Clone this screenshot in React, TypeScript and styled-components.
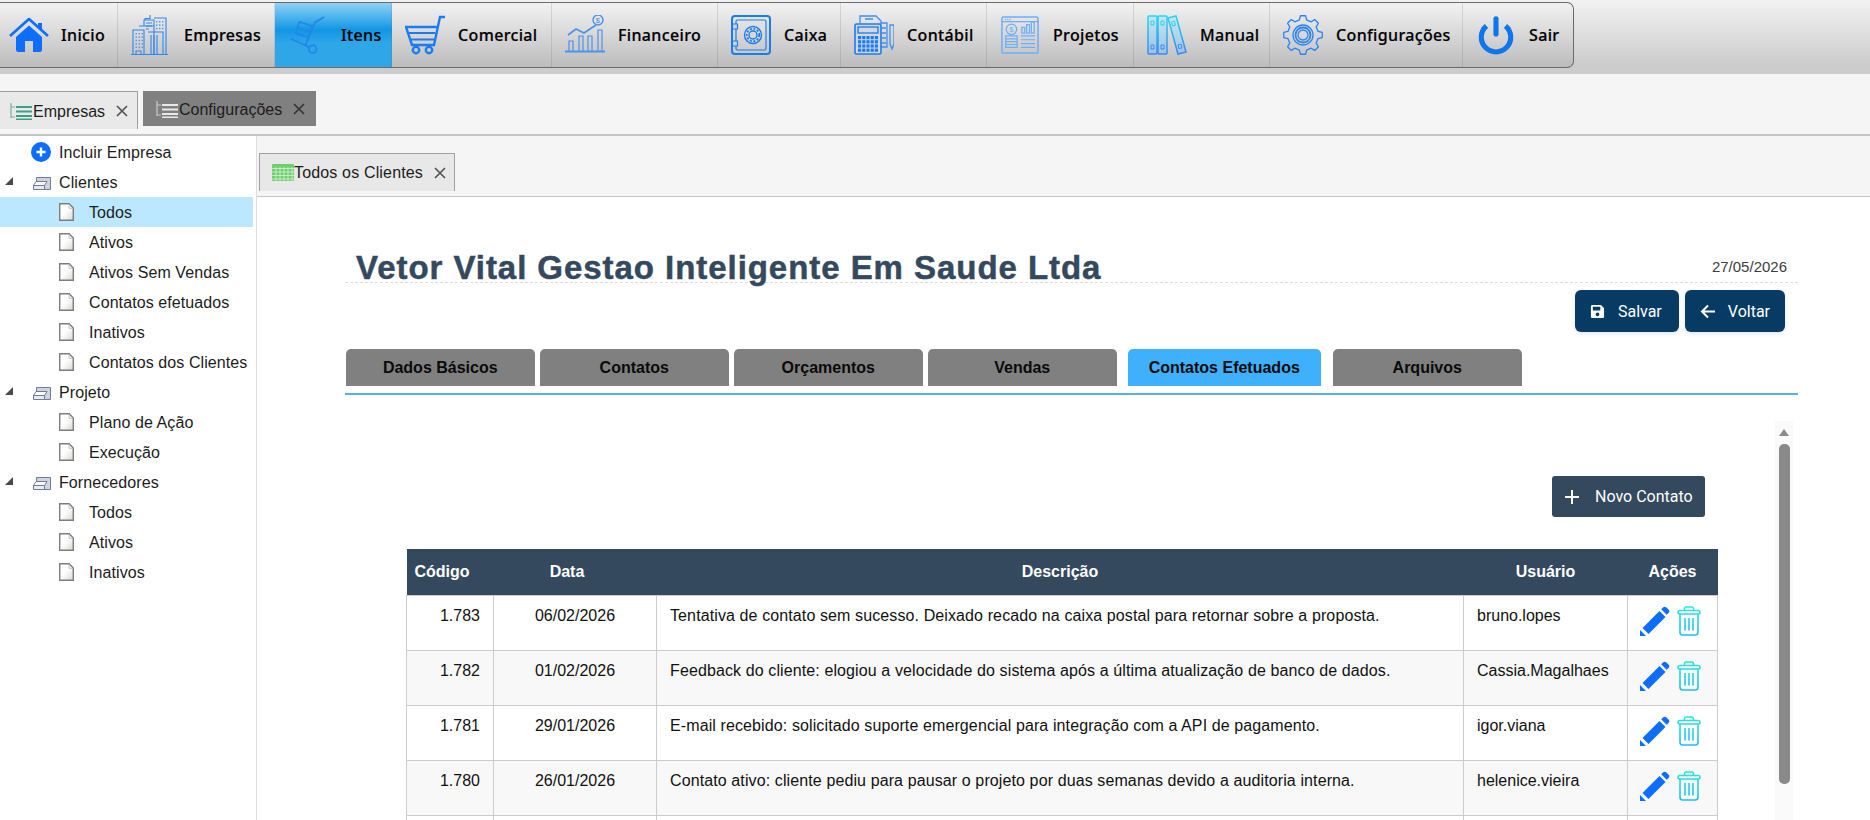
import React from "react";
import styled, { createGlobalStyle } from "styled-components";
import { FaSave } from "react-icons/fa";

const GlobalStyle = createGlobalStyle`
  html, body { margin: 0; padding: 0; height: 100%; background: #fff; overflow: hidden; }
  * { box-sizing: border-box; }
  body { font-family: "Liberation Sans", Arial, sans-serif; font-size: 16px; color: #1c1c1c; }
`;

/* ---------- toolbar icons ---------- */

const gearPath = (cx: number, cy: number, outer: number, inner: number, teeth: number) => {
  const pts: string[] = [];
  const step = (Math.PI * 2) / teeth;
  for (let i = 0; i < teeth; i++) {
    const a = i * step - Math.PI / 2;
    const p = (r: number, d: number) =>
      `${(cx + r * Math.cos(a + d)).toFixed(2)} ${(cy + r * Math.sin(a + d)).toFixed(2)}`;
    pts.push(`${i === 0 ? "M" : "L"}${p(inner, -step * 0.3)}`, `L${p(outer, -step * 0.17)}`, `L${p(outer, step * 0.17)}`, `L${p(inner, step * 0.3)}`);
  }
  return pts.join(" ") + " Z";
};

const Windows = ({ x, y, cols, rows, dx, dy, s = 1.4 }: { x: number; y: number; cols: number; rows: number; dx: number; dy: number; s?: number }) => (
  <>
    {Array.from({ length: rows * cols }).map((_, i) => (
      <rect key={i} x={x + (i % cols) * dx} y={y + Math.floor(i / cols) * dy} width={s} height={s} fill="currentColor" stroke="none" />
    ))}
  </>
);

const HomeIcon = () => (
  <svg viewBox="0 0 40 36" width="40" height="36" fill="#0d6efd">
    <path d="M29 6h4v7l-4-3.400z" />
    <path d="M1 19 20 2l19 17" fill="none" stroke="#0d6efd" strokeWidth="2.600" strokeLinejoin="round" />
    <path d="M7 20 20 8.500 33 20v12.500a2.500 2.500 0 0 1-2.500 2.500H24V24h-8v11H9.500A2.500 2.500 0 0 1 7 32.500z" />
  </svg>
);

const BuildingIcon = () => (
  <svg viewBox="0 0 40 40" width="40" height="40" fill="none" stroke="#2f86ee" strokeWidth="1.100" color="#4a96ef">
    <path d="M0 39.500h37M2 39V15h11V39M13 11V5h10v34M8 11h15M14 5V3.500h5V0M23 3h12v36" />
    <path d="M17 17h15v22M20 20v19M23 20v19M26 20v19" />
    <path d="M5 39v-3h5v3" />
    <Windows x={4.500} y={18} cols={3} rows={5} dx={3} dy={3.400} />
    <Windows x={25} y={6} cols={3} rows={3} dx={3} dy={3.400} />
    <path d="M15 8h6M15 11h6M15 14h3" />
  </svg>
);

const DollyIcon = () => (
  <svg viewBox="0 0 40 40" width="38" height="38" fill="none" stroke="#1f88e8" strokeWidth="1.800">
    <path d="M37 1 27 7 17 32M2 24l20 9" />
    <path d="M11 6l13 4.500-4 12-13-4.500zM9.500 12.500l13 4.500" />
    <circle cx="25" cy="35" r="4" />
  </svg>
);

const CartIcon = () => (
  <svg viewBox="0 0 40 40" width="40" height="40" fill="none" stroke="#1b7cf0" strokeWidth="2.400">
    <path d="M40 2h-5l-6 28H7L1 12h31" />
    <path d="M3 18h27.500M5 24.500h24" strokeWidth="2.200" />
    <circle cx="11" cy="35" r="3.200" />
    <circle cx="24" cy="35" r="3.200" />
  </svg>
);

const ChartIcon = () => (
  <svg viewBox="0 0 40 40" width="40" height="40" fill="none" stroke="#4b92e8" strokeWidth="1.200">
    <path d="M0 36.500h40" strokeWidth="1.800" />
    <path d="M4 36V26h4v10M14 36V21h4v15M23 36V21h4v15M33 36V15h4v21" />
    <path d="M3 20l8-6 8 4 12-8" strokeWidth="1.600" />
    <circle cx="33" cy="5" r="5" strokeWidth="1.400" />
    <text x="33" y="8" textAnchor="middle" fontSize="8" fill="#4b92e8" stroke="none" fontFamily="Liberation Sans, sans-serif">$</text>
  </svg>
);

const SafeIcon = () => (
  <svg viewBox="0 0 40 40" width="40" height="40" fill="none" stroke="#1b7cf0">
    <rect x="1" y="1" width="38" height="38" rx="3" strokeWidth="2" />
    <rect x="5" y="5" width="30" height="30" rx="1.500" strokeWidth="1.200" />
    <path d="M1.500 9h5v5h-5zM1.500 26h5v5h-5z" strokeWidth="1.200" fill="#cfd6dd" />
    <circle cx="22" cy="20" r="8.500" strokeWidth="1.400" />
    <circle cx="22" cy="20" r="4" strokeWidth="1.400" />
    <circle cx="22" cy="20" r="6.200" strokeWidth="1.800" strokeDasharray="2 1.600" />
  </svg>
);

const CalcIcon = () => (
  <svg viewBox="0 0 40 40" width="41" height="40" fill="none" stroke="#1b7cf0" strokeWidth="1.300" color="#1b7cf0">
    <path d="M6 8V1h16l5 5v3M11 4h8" stroke="#3f8fee" />
    <path d="M27 8h6v24h-6M28 13h4M28 18h4M28 23h4M28 28h4" stroke="#3f8fee" />
    <path d="M36 10h4v19l-2 5-2-5z" stroke="#3f8fee" />
    <rect x="1" y="9" width="26" height="30" rx="1.500" fill="#d3d8de" strokeWidth="1.600" />
    <rect x="4" y="12" width="20" height="6" />
    <Windows x={4} y={21} cols={5} rows={4} dx={4.200} dy={4.200} s={3.200} />
  </svg>
);

const ProjectsIcon = () => (
  <svg viewBox="0 0 40 40" width="38" height="38" fill="none" stroke="#6eaef7" strokeWidth="1.300" color="#6eaef7">
    <rect x="1" y="1" width="38" height="38" rx="1.500" strokeWidth="1.600" />
    <path d="M1 6h38" />
    <Windows x={4} y={3} cols={3} rows={1} dx={2.500} dy={0} />
    <circle cx="11" cy="14" r="5.500" />
    <text x="11" y="17" textAnchor="middle" fontSize="8" fill="#6eaef7" stroke="none" fontFamily="Liberation Sans, sans-serif">$</text>
    <path d="M5 21h12v3H5zM5 24h12v3H5zM5 27h12v3H5zM5 30h12v3H5z" />
    <path d="M22 18v-6h3v6zM27 18V9h3v9zM32 18V6.500h3V18zM21 21h15M21 25h15M21 29h15M21 33h15" />
  </svg>
);

const BooksIcon = () => (
  <svg viewBox="0 0 40 40" width="40" height="40" fill="none" stroke="url(#booksGrad)" strokeWidth="1.500">
    <defs>
      <linearGradient id="booksGrad" x1="0" y1="0" x2="0" y2="1">
        <stop offset="0" stopColor="#26d6f2" />
        <stop offset="1" stopColor="#3a86ee" />
      </linearGradient>
      <linearGradient id="booksFill" x1="0" y1="0" x2="0" y2="1">
        <stop offset="0" stopColor="#c4e8f0" />
        <stop offset="1" stopColor="#9cc2ea" />
      </linearGradient>
    </defs>
    <rect x="1" y="1" width="9" height="38" rx="1" fill="url(#booksFill)" />
    <rect x="11" y="1" width="9" height="38" rx="1" fill="url(#booksFill)" />
    <path d="M21 3l8-2 10 36-8 2z" fill="url(#booksFill)" />
    <path d="M4 6h3v4H4zM4 30h3v4H4zM14 6h3v4h-3zM14 30h3v4h-3zM24.500 7l3-.8 1 4-3 .8zM31 30l3-.8 1 3.600-3 .8z" strokeWidth="1" />
  </svg>
);

const GearIcon = () => (
  <svg viewBox="0 0 40 40" width="40" height="40" fill="none" stroke="#2a84f0" strokeWidth="1.300">
    <path d={gearPath(20, 20, 19.400, 15.500, 8)} strokeLinejoin="round" />
    <circle cx="20" cy="20" r="10" />
    <circle cx="20" cy="20" r="7.500" strokeWidth="1.800" />
    <circle cx="20" cy="20" r="5" />
  </svg>
);

const PowerIcon = () => (
  <svg viewBox="0 0 40 40" width="38" height="40" fill="none" stroke="#0d76ec" strokeWidth="5.400" strokeLinecap="round">
    <path d="M20 3v16" />
    <path d="M10 10.500a15.500 15.500 0 1 0 20 0" strokeLinecap="butt" />
  </svg>
);

/* ---------- small icons ---------- */

const ListIcon = ({ $tone }: { $tone: string }) => (
  <svg viewBox="0 0 24 18" width="24" height="18" fill="none" stroke={$tone}>
    <path d="M2 1v15M2 5h4M2 15h4" strokeWidth="1.200" opacity="0.7" />
    <path d="M7 5h16M7 9.500h16M7 14h16M7 17.500h16" strokeWidth="2" />
  </svg>
);

const GridIcon = () => (
  <svg viewBox="0 0 22 17" width="22" height="17" fill="#6fcf6f" stroke="#d6f3d6" strokeWidth="0.800">
    <rect width="22" height="17" rx="1" stroke="none" />
    <path d="M0 4.500h22M0 8h22M0 11.500h22M0 15h22M4 3v14M8 3v14M12 3v14M16 3v14M20 3v14" fill="none" />
  </svg>
);

const CloseIcon = ({ $tone = "#555" }: { $tone?: string }) => (
  <svg viewBox="0 0 12 12" width="12" height="12" fill="none" stroke={$tone} strokeWidth="1.700">
    <path d="M1 1l10 10M11 1 1 11" />
  </svg>
);

const ArrowIcon = () => (
  <svg viewBox="0 0 15 15" width="15" height="15" fill="none" stroke="#fff" strokeWidth="2">
    <path d="M15 7.500H2M8 1.500l-6 6 6 6" />
  </svg>
);

const PlusIcon = () => (
  <svg viewBox="0 0 14 14" width="14" height="14" fill="none" stroke="#fff" strokeWidth="2">
    <path d="M7 0v14M0 7h14" />
  </svg>
);

const PlusCircle = () => (
  <svg viewBox="0 0 20 20" width="20" height="20">
    <circle cx="10" cy="10" r="10" fill="#0d6efd" />
    <path d="M10 5.500v9M5.500 10h9" stroke="#fff" strokeWidth="2.400" />
  </svg>
);

const FolderOpen = () => (
  <svg viewBox="0 0 18 13" width="18" height="13" fill="#eef1f6" stroke="#6f7b98">
    <path d="M3.500.5h14v12h-14z" fill="#cdd3e0" />
    <path d="M3 4.500h11L11.500 8.500H.5z" strokeWidth="1" fill="#fff" />
    <path d="M.5 8.500h11v4H.5z" fill="#e6eaf2" />
  </svg>
);

const DocIcon = () => (
  <svg viewBox="0 0 15 18" width="15" height="18">
    <defs>
      <linearGradient id="docGrad" x1="0" y1="0" x2="1" y2="1">
        <stop offset="0.45" stopColor="#ffffff" />
        <stop offset="1" stopColor="#d8d9cf" />
      </linearGradient>
    </defs>
    <path d="M.7.7h9.500l4.100 4.300v12.300H.700z" fill="url(#docGrad)" stroke="#7d7d7d" strokeWidth="1.400" />
    <path d="M10 1v4.300h4" fill="none" stroke="#b5b5b5" strokeWidth="0.800" />
  </svg>
);

const PencilIcon = () => (
  <svg viewBox="0 0 30 30" width="30" height="30" fill="#0d6efd">
    <path d="M2.500 22 19.500 5l6 6-17 17z" />
    <path d="M21.200 3.300 23 1.500a2.400 2.400 0 0 1 3.400 0l2.100 2.100a2.400 2.400 0 0 1 0 3.400l-1.800 1.800z" />
    <path d="M0 30v-6l6 6z" />
  </svg>
);

const TrashIcon = () => (
  <svg viewBox="0 0 24 30" width="24" height="30" fill="none" stroke="url(#trashGrad)" strokeWidth="1.600">
    <defs>
      <linearGradient id="trashGrad" x1="0" y1="0" x2="0" y2="30" gradientUnits="userSpaceOnUse">
        <stop offset="0" stopColor="#2ce8d6" />
        <stop offset="1" stopColor="#1fbdf2" />
      </linearGradient>
    </defs>
    <path d="M7.500 4V2.500A1.700 1.700 0 0 1 9.200 1h5.600a1.700 1.700 0 0 1 1.700 1.500V4" />
    <rect x="1" y="4.500" width="22" height="3.500" rx="1.700" />
    <path d="M3 8v18.500A2.700 2.700 0 0 0 5.700 29h12.600a2.700 2.700 0 0 0 2.700-2.500V8" />
    <path d="M8 12v12.500M12 12v12.500M16 12v12.500" />
  </svg>
);

/* ---------- data ---------- */

const menu: { label: string; icon: React.ReactNode; active?: boolean; tight?: boolean }[] = [
  { label: "Inicio", icon: <HomeIcon />, tight: true },
  { label: "Empresas", icon: <BuildingIcon /> },
  { label: "Itens", icon: <DollyIcon />, active: true },
  { label: "Comercial", icon: <CartIcon /> },
  { label: "Financeiro", icon: <ChartIcon /> },
  { label: "Caixa", icon: <SafeIcon /> },
  { label: "Contábil", icon: <CalcIcon /> },
  { label: "Projetos", icon: <ProjectsIcon /> },
  { label: "Manual", icon: <BooksIcon /> },
  { label: "Configurações", icon: <GearIcon /> },
  { label: "Sair", icon: <PowerIcon /> },
];

const tree: { label: string; leaves: { label: string; selected?: boolean }[] }[] = [
  {
    label: "Clientes",
    leaves: [
      { label: "Todos", selected: true },
      { label: "Ativos" },
      { label: "Ativos Sem Vendas" },
      { label: "Contatos efetuados" },
      { label: "Inativos" },
      { label: "Contatos dos Clientes" },
    ],
  },
  { label: "Projeto", leaves: [{ label: "Plano de Ação" }, { label: "Execução" }] },
  { label: "Fornecedores", leaves: [{ label: "Todos" }, { label: "Ativos" }, { label: "Inativos" }] },
];

const tabs = ["Dados Básicos", "Contatos", "Orçamentos", "Vendas", "Contatos Efetuados", "Arquivos"];

const rows = [
  ["1.783", "06/02/2026", "Tentativa de contato sem sucesso. Deixado recado na caixa postal para retornar sobre a proposta.", "bruno.lopes"],
  ["1.782", "01/02/2026", "Feedback do cliente: elogiou a velocidade do sistema após a última atualização de banco de dados.", "Cassia.Magalhaes"],
  ["1.781", "29/01/2026", "E-mail recebido: solicitado suporte emergencial para integração com a API de pagamento.", "igor.viana"],
  ["1.780", "26/01/2026", "Contato ativo: cliente pediu para pausar o projeto por duas semanas devido a auditoria interna.", "helenice.vieira"],
];

/* ---------- component ---------- */

function App() {
  return (
    <Page>
      <GlobalStyle />
      <TopBand>
        <Toolbar>
          {menu.map((item) => (
            <MenuItem key={item.label} $active={item.active} $tight={item.tight}>
              <MenuIcon>{item.icon}</MenuIcon>
              <span>{item.label}</span>
            </MenuItem>
          ))}
        </Toolbar>
      </TopBand>

      <ModuleTabs>
        <ModuleTab>
          <ListIcon $tone="#3f9d8a" />
          <TabLabel>Empresas</TabLabel>
          <CloseIcon />
        </ModuleTab>
        <ModuleTab $dark>
          <ListIcon $tone="#e8e8e8" />
          <TabLabel>Configurações</TabLabel>
          <CloseIcon $tone="#333" />
        </ModuleTab>
      </ModuleTabs>

      <Body>
        <Sidebar>
          <TreeRow>
            <AddSlot>
              <PlusCircle />
            </AddSlot>
            <TreeLabel>Incluir Empresa</TreeLabel>
          </TreeRow>
          {tree.map((group) => (
            <React.Fragment key={group.label}>
              <TreeRow>
                <Caret />
                <FolderSlot>
                  <FolderOpen />
                </FolderSlot>
                <TreeLabel>{group.label}</TreeLabel>
              </TreeRow>
              {group.leaves.map((leaf) => (
                <LeafRow key={leaf.label} $selected={leaf.selected}>
                  <DocIcon />
                  <TreeLabel>{leaf.label}</TreeLabel>
                </LeafRow>
              ))}
            </React.Fragment>
          ))}
        </Sidebar>

        <Main>
          <ViewTabs>
            <ViewTab>
              <GridIcon />
              <ViewTabLabel>Todos os Clientes</ViewTabLabel>
              <CloseIcon />
            </ViewTab>
          </ViewTabs>

          <Content>
            <TitleRow>
              <Title>Vetor Vital Gestao Inteligente Em Saude Ltda</Title>
              <DateLabel>27/05/2026</DateLabel>
            </TitleRow>

            <Actions>
              <ActionButton $wide>
                <FaSave size={15} />
                Salvar
              </ActionButton>
              <ActionButton>
                <ArrowIcon />
                Voltar
              </ActionButton>
            </Actions>

            <TabBar>
              {tabs.map((tab) => (
                <TabButton key={tab} $active={tab === "Contatos Efetuados"}>
                  {tab}
                </TabButton>
              ))}
            </TabBar>

            <Pane>
              <PaneBody>
                <NewRow>
                  <NewButton>
                    <PlusIcon />
                    Novo Contato
                  </NewButton>
                </NewRow>

                <Table>
                  <colgroup>
                    <col width="87" />
                    <col width="163" />
                    <col width="807" />
                    <col width="164" />
                    <col width="90" />
                  </colgroup>
                  <thead>
                    <tr>
                      <HeadCell $shift={16}>Código</HeadCell>
                      <HeadCell $shift={16}>Data</HeadCell>
                      <HeadCell>Descrição</HeadCell>
                      <HeadCell>Usuário</HeadCell>
                      <HeadCell>Ações</HeadCell>
                    </tr>
                  </thead>
                  <tbody>
                    {rows.map((row) => (
                      <BodyRow key={row[0]}>
                        <Cell $align="right">{row[0]}</Cell>
                        <Cell $align="center">{row[1]}</Cell>
                        <DescriptionCell>{row[2]}</DescriptionCell>
                        <Cell>{row[3]}</Cell>
                        <ActionCell>
                          <ActionIcons>
                            <PencilIcon />
                            <TrashIcon />
                          </ActionIcons>
                        </ActionCell>
                      </BodyRow>
                    ))}
                    <BodyRow>
                      <Cell />
                      <Cell />
                      <Cell />
                      <Cell />
                      <ActionCell />
                    </BodyRow>
                  </tbody>
                </Table>
              </PaneBody>

              <ScrollTrack>
                <ScrollArrow />
                <ScrollThumb />
              </ScrollTrack>
            </Pane>
          </Content>
        </Main>
      </Body>
    </Page>
  );
}

const Page = styled.div`
  width: 1870px;
  height: 820px;
  overflow: hidden;
  display: flex;
  flex-direction: column;
  background: #fff;
`;

const TopBand = styled.header`
  height: 74px;
  padding-top: 2px;
  background: linear-gradient(#f2f2f2, #cccccc 88%);
`;

const Toolbar = styled.nav`
  display: grid;
  grid-template-columns: 118px 157px 117px 160px 166px 123px 146px 147px 136px 193px 110px;
  width: 1574px;
  height: 66px;
  border: 1px solid #6a6a6a;
  border-left: 0;
  border-radius: 0 7px 7px 0;
  background: linear-gradient(#f2f2f2, #e2e2e2 30%, #bcbcbc);
  overflow: hidden;
`;

const MenuItem = styled.div<{ $active?: boolean; $tight?: boolean }>`
  display: flex;
  align-items: center;
  gap: ${(p) => (p.$tight ? 12 : 13)}px;
  padding-left: ${(p) => (p.$tight ? 9 : 13)}px;
  border-right: 1px solid rgba(110, 110, 110, 0.2);
  font-family: "Noto Sans", Tahoma, sans-serif;
  font-size: 16px;
  font-weight: 500;
  letter-spacing: 0.35px;
  -webkit-text-stroke: 0.2px #000;
  color: #000;
  background: ${(p) => (p.$active ? "linear-gradient(#8fd2f6, #1197e4 42%, #2ea6e8 62%)" : "none")};

  &:last-child {
    border-right: 0;
  }
`;

const MenuIcon = styled.span`
  display: flex;
  align-items: center;
  justify-content: center;
  width: 40px;
  flex: none;
`;

const ModuleTabs = styled.div`
  height: 62px;
  display: flex;
  align-items: flex-start;
  gap: 5px;
  padding-top: 17px;
  background: #f5f5f5;
  border-bottom: 2px solid #c4c4c4;
`;

const ModuleTab = styled.div<{ $dark?: boolean }>`
  display: flex;
  align-items: center;
  width: ${(p) => (p.$dark ? 173 : 138)}px;
  height: ${(p) => (p.$dark ? 35 : 38)}px;
  padding-left: ${(p) => (p.$dark ? 12 : 9)}px;
  background: ${(p) => (p.$dark ? "#808080" : "#e9e9e9")};
  border: ${(p) => (p.$dark ? "0" : "1px solid #a0a0a0")};
  border-width: ${(p) => (p.$dark ? "0" : "1px 1px 0 0")};
  color: #1c1c1c;
`;

const TabLabel = styled.span`
  padding-top: 2px;
  margin-right: 11px;
`;

const Body = styled.div`
  flex: 1;
  min-height: 0;
  display: flex;
`;

const Sidebar = styled.aside`
  width: 257px;
  flex: none;
  padding: 1px 3px 0 0;
  border-right: 1px solid #dedede;
`;

const TreeRow = styled.div`
  position: relative;
  height: 30px;
  display: flex;
  align-items: center;
  padding-left: 59px;
`;

const TreeLabel = styled.span`
  padding-top: 2px;
  letter-spacing: 0.09px;
`;

const AddSlot = styled.span`
  position: absolute;
  left: 31px;
  top: 5px;
  display: flex;
`;

const FolderSlot = styled.span`
  position: absolute;
  left: 33px;
  top: 10px;
  display: flex;
`;

const Caret = styled.span`
  position: absolute;
  left: 5px;
  top: 10px;
  width: 0;
  height: 0;
  border-left: 8px solid transparent;
  border-bottom: 8px solid #4a4a4a;
`;

const LeafRow = styled.div<{ $selected?: boolean }>`
  height: 30px;
  display: flex;
  align-items: center;
  gap: 15px;
  padding-left: 59px;
  background: ${(p) => (p.$selected ? "#bbe8ff" : "transparent")};
`;

const Main = styled.main`
  flex: 1;
  min-width: 0;
  display: flex;
  flex-direction: column;
`;

const ViewTabs = styled.div`
  height: 61px;
  flex: none;
  display: flex;
  align-items: flex-end;
  padding: 0 0 5px 2px;
  background: #f5f5f5;
  border-bottom: 1px solid #c4c4c4;
`;

const ViewTab = styled.div`
  display: flex;
  align-items: center;
  width: 196px;
  height: 38px;
  padding-left: 12px;
  background: #e8e8e8;
  border: 1px solid #a0a0a0;
  border-bottom: 0;
`;

const ViewTabLabel = styled.span`
  margin-right: 11px;
  letter-spacing: 0.16px;
`;

const Content = styled.section`
  flex: 1;
  min-height: 0;
  display: flex;
  flex-direction: column;
  padding: 52px 72px 0 88px;
`;

const TitleRow = styled.div`
  height: 34px;
  flex: none;
  display: flex;
  align-items: flex-end;
  justify-content: space-between;
  padding: 0 11px;
  border-bottom: 1px dashed #dcdcdc;
`;

const Title = styled.h1`
  margin: 0 0 -2px;
  font-size: 33px;
  line-height: 33px;
  font-weight: 700;
  letter-spacing: 0.95px;
  -webkit-text-stroke: 0.5px #34495e;
  color: #34495e;
  white-space: nowrap;
`;

const DateLabel = styled.span`
  align-self: flex-start;
  margin-top: 9px;
  font-size: 15px;
  line-height: 18px;
  color: #3d3d3d;
`;

const Actions = styled.div`
  flex: none;
  display: flex;
  justify-content: flex-end;
  gap: 6px;
  padding: 7px 13px 0 0;
`;

const ActionButton = styled.button<{ $wide?: boolean }>`
  height: 42px;
  display: flex;
  align-items: center;
  gap: 13px;
  padding: 0 ${(p) => (p.$wide ? 17 : 15)}px 0 15px;
  border: 0;
  border-radius: 6px;
  background: #073b63;
  color: #fff;
  font-family: Roboto, sans-serif;
  font-size: 16px;
  box-shadow: 0 2px 4px rgba(7, 59, 99, 0.12);
`;

const TabBar = styled.div`
  flex: none;
  display: flex;
  gap: 5.5px;
  margin-top: 17px;
  padding: 0 0 7px 1px;
  border-bottom: 2px solid #55b0ec;
`;

const TabButton = styled.div<{ $active?: boolean }>`
  width: ${(p) => (p.$active ? 193.5 : 188.5)}px;
  height: 37px;
  margin: ${(p) => (p.$active ? "0 6.5px 0 5.5px" : "0")};
  display: flex;
  align-items: center;
  justify-content: center;
  border-radius: 5px 5px 0 0;
  background: ${(p) => (p.$active ? "#3fb0fb" : "#808080")};
  color: #0a0a0a;
  font-weight: 700;
`;

const Pane = styled.div`
  flex: 1;
  min-height: 0;
  display: flex;
  padding-right: 5px;
`;

const PaneBody = styled.div`
  flex: 1;
  min-width: 0;
  padding: 0 57px 0 61px;
`;

const NewRow = styled.div`
  width: 1311px;
  display: flex;
  justify-content: flex-end;
  padding: 81px 12px 32px 0;
`;

const NewButton = styled.button`
  width: 153px;
  height: 41px;
  display: flex;
  align-items: center;
  gap: 16px;
  padding: 0 0 0 13px;
  border: 0;
  border-radius: 3px;
  background: #34495e;
  color: #fff;
  font-family: Roboto, sans-serif;
  font-size: 16px;
  white-space: nowrap;
`;

const Table = styled.table`
  width: 1311px;
  border-collapse: collapse;
  table-layout: fixed;
`;

const HeadCell = styled.th<{ $shift?: number }>`
  height: 46px;
  padding: 0 ${(p) => p.$shift ?? 0}px 0 0;
  background: #34495e;
  color: #fff;
  font-size: 16px;
  font-weight: 700;
  text-align: center;
`;

const BodyRow = styled.tr`
  &:nth-child(even) {
    background: #f8f8f8;
  }
`;

const Cell = styled.td<{ $align?: string }>`
  height: 55px;
  padding: 11px 13px 0;
  vertical-align: top;
  border: 1px solid #cccccc;
  text-align: ${(p) => p.$align ?? "left"};
  line-height: 18px;
  color: #111;
`;

const DescriptionCell = styled(Cell)`
  letter-spacing: 0.11px;
`;

const ActionCell = styled(Cell)`
  padding: 10px 0 0 12px;
`;

const ActionIcons = styled.div`
  display: flex;
  align-items: flex-start;
  gap: 7px;
`;

const ScrollTrack = styled.div`
  width: 18px;
  flex: none;
  margin-top: 26px;
  display: flex;
  flex-direction: column;
  align-items: center;
  background: #fafafa;
`;

const ScrollArrow = styled.span`
  width: 0;
  height: 0;
  margin-top: 8px;
  border: 5px solid transparent;
  border-top: 0;
  border-bottom: 7px solid #8a8a8a;
`;

const ScrollThumb = styled.span`
  width: 11px;
  height: 340px;
  margin-top: 8px;
  border-radius: 5px;
  background: #8a8a8a;
`;

export default App;
